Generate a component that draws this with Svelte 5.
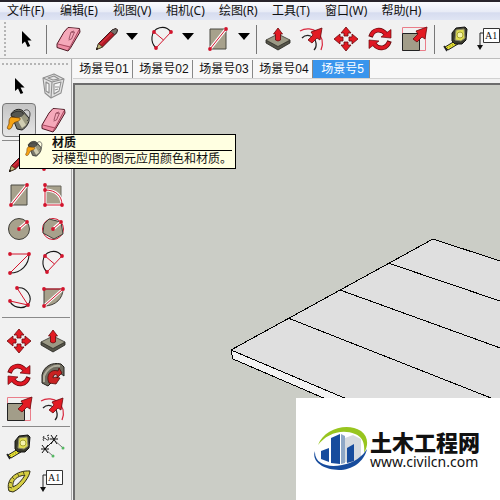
<script lang="ts">
  interface Tool {
    icon: string;
    label: string;
    menu?: boolean;
  }

  const menus = [
    '文件(F)',
    '编辑(E)',
    '视图(V)',
    '相机(C)',
    '绘图(R)',
    '工具(T)',
    '窗口(W)',
    '帮助(H)',
  ];

  const toolbar: Tool[][] = [
    [{ icon: 'select', label: '选择' }],
    [
      { icon: 'eraser', label: '擦除' },
      { icon: 'pencil', label: '直线', menu: true },
      { icon: 'arc', label: '圆弧', menu: true },
      { icon: 'rect', label: '矩形', menu: true },
    ],
    [
      { icon: 'push', label: '推/拉' },
      { icon: 'offset', label: '偏移' },
      { icon: 'move', label: '移动' },
      { icon: 'rotate', label: '旋转' },
      { icon: 'scale', label: '缩放' },
    ],
    [
      { icon: 'tape', label: '卷尺' },
      { icon: 'text', label: '文字' },
    ],
  ];

  const palette: { name: string; tools: Tool[] }[] = [
    {
      name: 'principal',
      tools: [
        { icon: 'select', label: '选择' },
        { icon: 'component', label: '制作组件' },
        { icon: 'paint', label: '材质' },
        { icon: 'eraser', label: '擦除' },
      ],
    },
    {
      name: 'draw',
      tools: [
        { icon: 'pencil', label: '直线' },
        { icon: 'freehand', label: '手绘线' },
        { icon: 'rect', label: '矩形' },
        { icon: 'rotrect', label: '旋转矩形' },
        { icon: 'circle', label: '圆' },
        { icon: 'polygon', label: '多边形' },
        { icon: 'arccenter', label: '圆弧' },
        { icon: 'arc', label: '两点圆弧' },
        { icon: 'arcthree', label: '三点圆弧' },
        { icon: 'pie', label: '扇形' },
      ],
    },
    {
      name: 'modify',
      tools: [
        { icon: 'move', label: '移动' },
        { icon: 'push', label: '推/拉' },
        { icon: 'rotate', label: '旋转' },
        { icon: 'follow', label: '路径跟随' },
        { icon: 'scale', label: '缩放' },
        { icon: 'offset', label: '偏移' },
      ],
    },
    {
      name: 'measure',
      tools: [
        { icon: 'tape', label: '卷尺' },
        { icon: 'dimension', label: '尺寸' },
        { icon: 'protractor', label: '量角器' },
        { icon: 'text', label: '文字' },
      ],
    },
  ];

  const scenes = ['场景号01', '场景号02', '场景号03', '场景号04', '场景号5'];

  let activeTool = $state('paint');
  let activeScene = $state('场景号5');
</script>

{#snippet dots(points: number[][])}
  {#each points as [x, y]}
    <circle cx={x} cy={y} r="1.9" fill="#d2142c" />
  {/each}
{/snippet}

{#snippet icon(name: string)}
  <svg class="icon" viewBox="0 0 28 28" aria-hidden="true" fill="none" stroke-linejoin="round">
    {#if name === 'select'}
      <path d="M10 6v13l3-2.5 2.6 5.6 2.6-1.2-2.6-5.3h4z" fill="#000" />
    {:else if name === 'component'}
      <g stroke="#8f8f8f" stroke-width="1.1">
        <path d="M4 6l11-4 10 5-3 14-10 5-6-5z" fill="#e3e3e3" />
        <path d="M4 6l9 4 12-3M13 10l-1 16" />
        <path d="M7 10l3 2v9l-3-2zM15 12l7-2-2 9-5 3z" fill="#f6f6f6" />
        <path d="M9 6l6-2 5 3-6 1zM16 15h4M16 18l3-1" />
      </g>
    {:else if name === 'paint'}
      <path d="M6 8c3-5 9-6 12-3l6 7c1 4-3 10-7 12l-5-1z" fill="#77766a" stroke="#222" />
      <path d="M6 10c0-4 9-7 12-3 2 3-2 5-6 5z" fill="#555650" stroke="#222" stroke-width="0.8" />
      <path d="M11 12l6 10c4-2 6-5 7-9l-5-5c-2 3-5 4-8 4z" fill="#99987f" />
      <path d="M12 13l5 9 4-3-5-8z" fill="#d0cdb2" />
      <path d="M18 6c3-4 7-2 7 2 0 3-1 5-3 7" stroke="#444" />
      <path d="M6 11l9 1c1 4-5 3-7 6-1 3-2 6-5 5-2-1 1-4 1-6 0-3 0-4 2-6z" fill="#f6a314" stroke="#74450c" stroke-width="0.8" />
    {:else if name === 'eraser'}
      <path d="M3 19l7-12 4-4.5 11.5 1 .5 3.5-9.5 16-2.5 3L3 22.5z" fill="#ef8da4" stroke="#4e1a25" />
      <path d="M10.5 7.5l4-4.5 10.5 1-8.5 17L4 19z" fill="#f5a9ba" />
      <path d="M4 19l12 3 9-17M16 22l-2 3" stroke="#a74b61" />
      <path d="M15 14l2-7 3-1M14.5 15l3-1 3-7-3 .5" stroke="#94495c" stroke-width="0.9" />
    {:else if name === 'pencil'}
      <path d="M4.5 24.5l2-6L20 5l4-1.500 1.500 1.500-1 3L10.500 22z" fill="#b51926" stroke="#300b0c" stroke-width="0.9" />
      <path d="M4.5 24.5l2-6 4 3.5z" fill="#bfb97d" stroke="#332d16" stroke-width="0.7" />
      <path d="M20 5l4-1.5 1.5 1.5-1 3-2 1.5-4-3z" fill="#77726b" stroke="#222" stroke-width="0.7" />
      <path d="M8.5 19L20 7.5" stroke="#e24950" />
      <path d="M4 25l2-1-1-1.5z" fill="#000" />
    {:else if name === 'freehand'}
      <path d="M5 22C10 2 16 2 15 11s8 14 10 5" stroke="#c42336" stroke-width="1.4" />
      {@render dots([[5, 22], [25, 16]])}
    {:else if name === 'arc'}
      <path d="M23 7C17-1 5 2 4 12c-.5 4 1 8 4 11" stroke="#151515" stroke-width="1.1" />
      <path d="M23 7L8 23M6 7l9.5 8" stroke="#d2142c" />
      {@render dots([[23, 7], [6, 7], [8, 23]])}
    {:else if name === 'rect'}
      <path d="M6 4h16v20H6z" fill="#a7a18c" stroke="#4b4a43" />
      <path d="M6 24L22 4" stroke="#fff" stroke-width="3" />
      <path d="M6 24L22 4" stroke="#d2142c" />
      {@render dots([[6, 24], [22, 4]])}
    {:else if name === 'rotrect'}
      <path d="M6 5h16v19H6z" fill="#a7a18c" stroke="#69665c" />
      <path d="M6 5v19h17C23 15 17 9 6 9" stroke="#fff" stroke-width="3" />
      <path d="M6 5v19h17C23 15 17 9 6 9" stroke="#d2142c" />
      {@render dots([[6, 4], [6, 9], [6, 24], [23, 24]])}
    {:else if name === 'circle'}
      <circle cx="14" cy="14" r="10.5" fill="#a7a18c" stroke="#403f39" />
      <path d="M14 14l8-7" stroke="#fff" stroke-width="3" />
      <path d="M14 14l8-7" stroke="#d2142c" />
      {@render dots([[14, 14], [22, 7]])}
    {:else if name === 'polygon'}
      <circle cx="14" cy="14" r="10.5" stroke="#d2142c" />
      <path d="M10 4l12 3 2 12-9 5-11-6 1-9z" fill="#a7a18c" stroke="#403f39" />
      <path d="M14 14l8-7" stroke="#fff" stroke-width="3" />
      <path d="M14 14l8-7" stroke="#d2142c" />
      {@render dots([[14, 14], [22, 7]])}
    {:else if name === 'arccenter'}
      <path d="M24 5c0 11-8 19-19 19" stroke="#151515" stroke-width="1.1" />
      <path d="M5 5h19L5 24" stroke="#d2142c" />
      {@render dots([[5, 5], [24, 5], [5, 24]])}
    {:else if name === 'arcthree'}
      <path d="M12 5c9-2 17 9 11 17-6 5-16 2-18-4" stroke="#151515" stroke-width="1.1" />
      <path d="M12 5l11 17-18-4" stroke="#d2142c" />
      {@render dots([[12, 5], [23, 22], [5, 18]])}
    {:else if name === 'pie'}
      <path d="M5 6h19c0 9-7 17-19 17z" fill="#a7a18c" stroke="#403f39" />
      <path d="M24 6L5 23" stroke="#fff" stroke-width="3" />
      <path d="M5 6h19L5 23" stroke="#d2142c" />
      {@render dots([[5, 6], [24, 6], [5, 23]])}
    {:else if name === 'push'}
      <path d="M2 15l12 6.5L26 15v3l-12 7-12-7z" fill="#555449" stroke="#25251f" stroke-width="0.8" />
      <path d="M2 15l12-6 12 6-12 6.5z" fill="#9b9985" stroke="#37362f" stroke-width="0.8" />
      <path d="M11.5 15V9h-2L14 3l4.5 6h-2v6l-2.500 1z" fill="#e31b23" stroke="#68090d" stroke-width="0.8" />
    {:else if name === 'offset'}
      <path d="M2 6C14-1 29 10 23 25" stroke="#d8283e" stroke-width="1.3" />
      <path d="M4 13c5-5 13-2 14 5 .5 3-1 6-2 7" stroke="#222" stroke-width="1.3" />
      <path d="M10 15l5-5-2-3 11-4-2 12-3-2-5 5z" fill="#e31b23" stroke="#68090d" stroke-width="0.8" />
    {:else if name === 'move'}
      <g fill="#e31b23" stroke="#68090d" stroke-width="0.8">
        <path d="M14 2l5 6h-3v3h-4V8H9z" />
        <path d="M14 26l5-6h-3v-3h-4v3H9z" />
        <path d="M2 14l6-5v3h3v4H8v3z" />
        <path d="M26 14l-6-5v3h-3v4h3v3z" />
      </g>
    {:else if name === 'rotate'}
      <g stroke="#68090d" stroke-width="4.6">
        <path d="M4.5 12C7 4 15 3 20 9" />
        <path d="M23.5 16C21 24 13 25 8 19" />
      </g>
      <g fill="#df1824" stroke="#68090d" stroke-width="0.7">
        <path d="M25 4.5V13l-10-1z" />
        <path d="M3 23.5V15l10 1z" />
      </g>
      <g stroke="#df1824" stroke-width="3.2">
        <path d="M5 11C7.500 4 15 3 20 9" />
        <path d="M23 17C20.500 24 13 25 8 19" />
      </g>
    {:else if name === 'follow'}
      <path d="M3 22V14C5 5 13 1 22 3l3 3v9l-4-3c-4-1-8 2-8 9l-4 4z" fill="#6f6c60" stroke="#25231e" />
      <path d="M5 21v-6C8 8 14 4 21 5" stroke="#b0ad9c" stroke-width="2" />
      <path d="M9 19c-1-7 4-11 10-9l1-3 3 5-5 5v-3c-3-1-4 1-4 3l2-1 5 1-4 6-7-1z" fill="#c92222" stroke="#4c100e" stroke-width="0.8" />
    {:else if name === 'scale'}
      <path d="M2.5 2.5h23v23h-23z" stroke="#ea7d89" />
      <path d="M2.5 8.5h17v17h-17z" fill="#a29d89" stroke="#222" />
      <path d="M13 14l5-5-2-3 11-4-2 12-3-2-5 5z" fill="#e31b23" stroke="#68090d" stroke-width="0.8" />
    {:else if name === 'tape'}
      <path d="M3 22l10-6 3 3-10 6z" fill="#e4df33" stroke="#222" />
      <path d="M5 23l9-5" stroke="#6d6a15" stroke-dasharray="1 2" />
      <path d="M10 8l4-5 9-1 2 2-1 11-4 4h-7l-3-3z" fill="#3a3a2c" stroke="#151515" />
      <path d="M14 5l8-1 1 9-4 3-6-1z" fill="#e1de51" stroke="#8b8a69" />
      <circle cx="18" cy="10" r="3" fill="#f5f3ac" stroke="#a6a232" />
      <path d="M2 21l3 5" stroke="#222" stroke-width="1.5" />
    {:else if name === 'dimension'}
      <path d="M6 16l9-9" stroke="#222" />
      <path d="M6 16l8 7M15 7l8 7" stroke="#777" />
      <path d="M2 16h8M3 12l6 8M9 12l-6 8M11 6h8M12 2l6 9M18 2l-6 9" stroke="#111" />
      <path d="M4 5l1-2M5 8c-2-2 0-4 2-2s4 1 2-2M8 3l2-1" stroke="#222" />
      <circle cx="14" cy="23" r="1.5" fill="#54b862" />
      <circle cx="24" cy="15" r="1.5" fill="#54b862" />
    {:else if name === 'protractor'}
      <path fill-rule="evenodd" d="M4 24C0 12 12 3 25 4c0 5-8 17-17 21zM8 20c5-2 9-7 12-12C12 9 7 13 8 20z" fill="#d5cd42" stroke="#2d2b15" />
      <path d="M4 20l3 1M4 15l3 1M7 10l2 2M12 6l2 3M18 4l1 3" stroke="#57531e" />
    {:else if name === 'text'}
      <path d="M7 8H4v14" stroke="#222" />
      <path d="M1 20h6l-3 5z" fill="#111" />
      <path d="M7.5 3.5h16v14h-16z" fill="#fff" stroke="#333" />
      <text x="9" y="14" font-size="10" fill="#111">A1</text>
    {/if}
  </svg>
{/snippet}

<div class="app">
  <nav class="menubar">
    {#each menus as menu}
      <button>{menu}</button>
    {/each}
  </nav>

  <div class="toolbar">
    {#each toolbar as group, i}
      {#if i > 0}
        <span class="separator"></span>
      {/if}
      {#each group as tool}
        {#if tool.menu}
          <span class="split">
            <button class="tool" aria-label={tool.label}>{@render icon(tool.icon)}</button>
            <button class="more" aria-label="{tool.label}选项"><i></i></button>
          </span>
        {:else}
          <button class="tool" aria-label={tool.label}>{@render icon(tool.icon)}</button>
        {/if}
      {/each}
    {/each}
  </div>

  <div class="workspace">
    <aside class="palette">
      {#each palette as group}
        <div class="group {group.name}">
          {#each group.tools as tool}
            <button
              class="tool"
              class:active={tool.icon === activeTool}
              aria-label={tool.label}
              onclick={() => (activeTool = tool.icon)}
            >
              {@render icon(tool.icon)}
            </button>
          {/each}
        </div>
      {/each}

      <div class="tooltip" role="tooltip">
        {@render icon('paint')}
        <div class="tip-body">
          <strong>材质</strong>
          <span>对模型中的图元应用颜色和材质。</span>
        </div>
      </div>
    </aside>

    <main>
      <div class="scenes">
        {#each scenes as scene}
          <button class:current={scene === activeScene} onclick={() => (activeScene = scene)}>
            {scene}
          </button>
        {/each}
      </div>

      <div class="viewport">
        <svg class="model" aria-label="模型" shape-rendering="crispEdges">
          <path d="M156 265L358 154l642 211v257z" fill="#dfdfdf" />
          <path d="M156 265l844 357v15L158 274z" fill="#f2f2f2" />
          <g fill="none" stroke="#000">
            <path d="M1000 622L156 265 358 154l642 211" />
            <path d="M156 265l2 9 842 363" />
            <path d="M313 178l687 233M265 205l735 266M213 233l787 310" />
          </g>
        </svg>

        <div class="brand">
          <svg class="emblem" viewBox="0 0 56 46" aria-hidden="true">
            <path d="M4 19C10 3 33-4 47 5c7 5 8 14 3 22 1-9-1-16-9-19C28 2 12 8 4 19z" fill="#98c51f" />
            <path d="M7 25l8-3v14l-8-3z" fill="#174c9d" />
            <path d="M17 12l9-4v30l-9-1z" fill="#174c9d" />
            <path d="M27 8l4 2v27l-4 1z" fill="#8ea7c6" />
            <path d="M31 12l8-3 8 4v20l-11 4-5-1z" fill="#d6dadf" />
            <path d="M33 22l7-4v17l-7 2z" fill="#174c9d" />
            <path d="M1 25c-1 13 13 17 27 14 12-2 21-9 25-16-3 13-15 21-28 21C9 44-3 35 1 25z" fill="#174c9d" />
          </svg>
          <div class="brand-text">
            <strong>土木工程网</strong>
            <span>www.civilcn.com</span>
          </div>
        </div>
      </div>
    </main>
  </div>
</div>

<style>
  :global(body) {
    margin: 0;
  }

  .app {
    display: flex;
    flex-direction: column;
    min-height: 100vh;
    overflow: hidden;
    background: #f1f1f1;
    color: #111;
    font: 12px/16px 'Liberation Sans', 'Noto Sans CJK SC', sans-serif;
  }

  button {
    flex-shrink: 0;
    margin: 0;
    padding: 0;
    border: 0;
    background: none;
    color: inherit;
    font: inherit;
    white-space: nowrap;
  }

  .menubar {
    display: flex;
    height: 18px;
    border-top: 2px solid #28242c;
    background: linear-gradient(#fafbfe 0%, #e8ebf6 55%, #d6dcef 60%, #e0e5f4 100%);
    font-family: 'Noto Sans', 'Noto Sans CJK SC', sans-serif;
  }

  .menubar button {
    min-width: 53px;
    padding: 0 7px;
    text-align: left;
  }

  .toolbar {
    display: flex;
    align-items: center;
    box-sizing: border-box;
    height: 39px;
    padding-left: 9px;
    border-bottom: 1px solid #bcbcbc;
    background: linear-gradient(#f1f1f1 50%, transparent 50%) 4px 4px / 2px 4px repeat-y,
      linear-gradient(90deg, transparent 4px, #b5b5b5 4px, #b5b5b5 6px, transparent 6px), #f1f1f1;
  }

  .separator {
    flex-shrink: 0;
    width: 1px;
    height: 29px;
    margin: 0 4px 0 3px;
    background: #777;
  }

  .tool {
    display: grid;
    place-items: center;
    box-sizing: border-box;
    width: 34px;
    height: 34px;
  }

  .icon {
    display: block;
    width: 28px;
    height: 28px;
    font-family: 'Liberation Serif', serif;
  }

  .split {
    display: flex;
    flex-shrink: 0;
    margin-left: 4px;
  }

  .more {
    width: 18px;
    padding: 0 3px 6px;
  }

  .more i {
    display: block;
    border: 6px solid transparent;
    border-top: 7px solid #000;
    border-bottom: 0;
  }

  .workspace {
    display: flex;
    flex: 1;
  }

  .palette {
    position: relative;
    z-index: 1;
    flex-shrink: 0;
    box-sizing: border-box;
    width: 72px;
    padding: 10px 1px 0 2px;
    border-right: 1px solid #a9a9a9;
  }

  .palette::before {
    content: '';
    display: block;
    height: 2px;
    margin: -6px 0 4px;
    background: repeating-linear-gradient(90deg, #b5b5b5 0 2px, transparent 2px 4px);
  }

  .group {
    display: grid;
    grid-template-columns: 34px 34px;
  }

  .group + .group {
    margin-top: 3px;
    padding-top: 3px;
    border-top: 1px solid #8a8a8a;
  }

  .group.modify {
    padding-top: 6px;
  }

  .group.measure {
    margin-top: 0;
  }

  .active {
    border: 1px solid #777;
    border-radius: 4px;
    background: linear-gradient(#c4c4c4, #e6e6e6);
  }

  .tooltip {
    position: absolute;
    top: 75px;
    left: 19px;
    display: flex;
    gap: 8px;
    padding: 1px 3px 1px 4px;
    border: 1px solid #000;
    background: #ffffe1;
    white-space: nowrap;
  }

  .tooltip .icon {
    width: 20px;
    height: 20px;
    margin-top: 3px;
  }

  .tip-body {
    display: flex;
    flex-direction: column;
  }

  .tip-body strong {
    height: 14px;
    border-bottom: 1px solid #000;
    line-height: 14px;
  }

  main {
    display: flex;
    flex: 1;
    flex-direction: column;
    min-width: 0;
    padding-left: 1px;
  }

  .scenes {
    display: flex;
    height: 20px;
    margin-bottom: 4px;
    padding-top: 1px;
    border-bottom: 1px solid #d2d2d2;
    box-sizing: border-box;
    background: #f8f8f8;
  }

  .scenes button {
    min-width: 60px;
    padding: 0 3px 0 6px;
    border-right: 1px solid #888;
  }

  .scenes button.current {
    min-width: 57px;
    background: #3995ed;
    color: #fff;
  }

  .viewport {
    position: relative;
    display: flex;
    flex: 1;
    align-items: flex-end;
    justify-content: flex-end;
    overflow: hidden;
    border: solid #6c6c6c;
    border-width: 2px 0 0 2px;
    background: #cbcdc6;
  }

  .model {
    position: absolute;
    inset: 0;
    width: 100%;
    height: 100%;
  }

  .brand {
    position: relative;
    display: flex;
    align-items: center;
    box-sizing: border-box;
    height: 102px;
    padding: 0 18px;
    background: #fff;
  }

  .emblem {
    width: 56px;
    height: 46px;
  }

  .brand-text {
    display: flex;
    flex-direction: column;
    width: 112px;
    padding-top: 4px;
    font-family: 'Noto Sans', 'Noto Sans CJK SC', sans-serif;
    white-space: nowrap;
  }

  .brand-text strong {
    font-size: 22px;
    font-weight: 900;
    line-height: 22px;
  }

  .brand-text span {
    font-size: 14px;
    line-height: 18px;
  }
</style>
